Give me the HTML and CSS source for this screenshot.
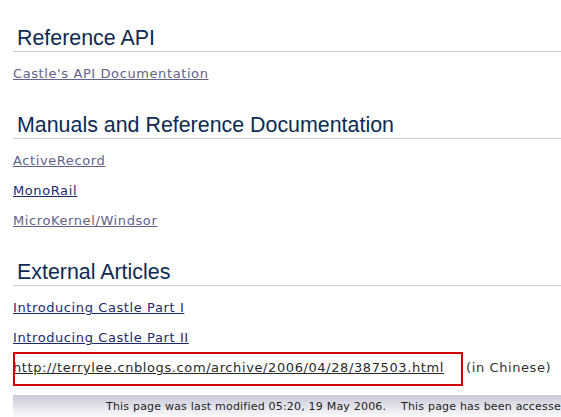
FILE: index.html
```html
<!DOCTYPE html>
<html>
<head>
<meta charset="utf-8">
<link rel="stylesheet" href="styles.css">
</head>
<body>
<div class="page">
  <h2 class="sec first">Reference API</h2>
  <p class="item"><a class="visited" href="#">Castle's API Documentation</a></p>

  <h2 class="sec">Manuals and Reference Documentation</h2>
  <p class="item"><a class="visited" href="#">ActiveRecord</a></p>
  <p class="item"><a class="fresh" href="#">MonoRail</a></p>
  <p class="item"><a class="visited" href="#">MicroKernel/Windsor</a></p>

  <h2 class="sec">External Articles</h2>
  <p class="item"><a class="fresh" href="#">Introducing Castle Part I</a></p>
  <p class="item"><a class="fresh" href="#">Introducing Castle Part II</a></p>
  <div class="item row">
    <span class="cell marked"><a class="dark" href="#">http://terrylee.cnblogs.com/archive/2006/04/28/387503.html</a></span>
    <span class="note">(in Chinese)</span>
  </div>

  <div class="footer">This page was last modified 05:20, 19 May 2006.&nbsp;&nbsp;&nbsp; This page has been accessed</div>
</div>
</body>
</html>
```

FILE: styles.css
```css
html, body {
  margin: 0;
  padding: 0;
  background: #ffffff;
  overflow: hidden;
}
.page {
  padding-left: 13px;
  padding-top: 25px;
}
.sec {
  font-family: "Liberation Sans", Arial, sans-serif;
  font-weight: normal;
  font-size: 21.4px;
  line-height: 26px;
  color: #0c2a52;
  margin: 23px 0 7px 0;
  padding: 0 0 0 4px;
  border-bottom: 1px solid #cccccc;
}
.sec.first {
  margin-top: 0;
}
.item {
  margin: 0;
  font-family: "DejaVu Sans", Verdana, sans-serif;
  font-size: 13px;
  letter-spacing: 0.6px;
  line-height: 30px;
  white-space: nowrap;
}
.item a {
  text-decoration: underline;
}
.visited { color: #62628a; }
.fresh { color: #1a2a6c; }
.dark { color: #2a2a2a; }
.row {
  display: flex;
}
.cell {
  width: 453px;
  flex: none;
  position: relative;
}
.marked::after {
  content: "";
  position: absolute;
  left: 0;
  top: -1px;
  width: 450px;
  height: 34px;
  box-sizing: border-box;
  border: 2px solid #d40000;
}
.note {
  color: #333333;
}
.footer {
  margin-top: 12px;
  height: 24px;
  background: linear-gradient(#c9c9d9, #ffffff);
  font-family: "DejaVu Sans", Verdana, sans-serif;
  font-size: 11px;
  letter-spacing: 0.2px;
  line-height: 24px;
  color: #222222;
  white-space: nowrap;
  overflow: hidden;
  padding-left: 93px;
}
```
